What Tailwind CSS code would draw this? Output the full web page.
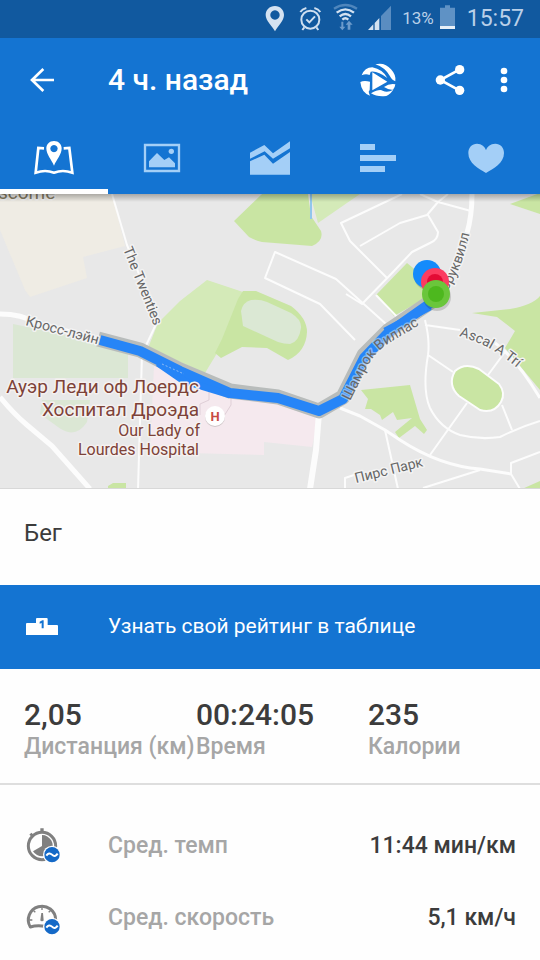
<!DOCTYPE html>
<html lang="ru">
<head>
<meta charset="utf-8">
<meta name="viewport" content="width=device-width, initial-scale=1">
<title>4 ч. назад</title>
<script src="https://cdn.jsdelivr.net/npm/@tailwindcss/browser@4"></script>
</head>
<body class="min-h-screen bg-[#fefefe] font-[Roboto,'Noto_Sans',sans-serif] text-[#3c3c3c]">

<div class="flex h-[38px] items-center justify-end gap-[6px] bg-[#11599f] pr-4 text-[#b9d0e9]">
  <svg class="h-[38px] w-7" viewBox="18 0 84 114" aria-label="Геолокация"><path fill="#d4e2f1" fill-rule="evenodd" d="M51 18C34 18 23 30 23 45C23 62 42 78 51 94C60 78 78 62 78 45C78 30 67 18 51 18ZM51 31A14 14 0 1 1 50.900 31Z"/></svg>
  <svg class="h-[38px] w-7" viewBox="120 0 84 114" fill="none" stroke="#cfdff0" stroke-width="6" aria-label="Будильник"><circle cx="157" cy="59" r="27"/><path d="M145 58L154 67L171 49M139 82L133 90M175 82L181 90M127 36Q133 27 145 24M169 24Q181 27 187 36"/></svg>
  <svg class="h-[38px] w-[27px]" viewBox="222 0 81 114" fill="none" stroke-width="7" aria-label="Wi-Fi"><path stroke="#4f86bd" d="M228 26Q262 4 297 26"/><g stroke="#d4e2f1"><path d="M236 38Q262 18 288 38M245 49Q262 35 279 49M253 59Q262 51 271 59"/></g><path fill="#6c9bcb" d="M250 65H256V80H262L253 91L244 80H250ZM269 89V74H263L273 62L284 74H277V89Z"/></svg>
  <svg class="h-[38px] w-[31px]" viewBox="321 0 93 114" aria-label="Сигнал сети"><path fill="#5a8dc1" d="M369 48L399 17V90H369Z"/><path fill="#d4e2f1" d="M330 90L346 73V90ZM350 69L364 54V90H350Z"/></svg>
  <span class="text-[17px]">13%</span>
  <svg class="h-[38px] w-[21px]" viewBox="543 0 63 114" aria-label="Батарея"><path fill="#5f92c5" d="M558 16H573V23H588V78H543V23H558Z"/><path fill="#e8f0f8" d="M543 78H588V87H543Z"/></svg>
  <time class="text-[23px] leading-[38px]">15:57</time>
</div>

<header class="bg-[#1474d2] text-white">
  <div class="flex h-21 items-center pr-[18px]">
    <button type="button" class="ml-6 grid size-9 place-items-center" aria-label="Назад">
      <svg class="size-9" viewBox="72 66 108 108" fill="none" stroke="currentColor" stroke-width="8"><path d="M130 87L96 120L130 153M95 120H162"/></svg>
    </button>
    <h1 class="ml-12 flex-1 text-[30px] leading-9 font-medium">4 ч. назад</h1>
    <button type="button" class="grid h-12 w-18 place-items-center" aria-label="Повтор тренировки">
      <svg class="h-9 w-10" viewBox="264 66 120 108" fill="currentColor"><path d="M275 106Q284 82 307 82Q338 88 352 114Q322 91 302 95L299 105Q287 100 275 106ZM316 73Q345 66 363 88Q379 105 376 124Q367 122 358 106Q344 82 316 73ZM307 97L352 125L307 151ZM271 126Q282 120 300 125L299 151Q293 154 300 167Q274 158 271 126ZM303 160Q328 146 338 152Q352 160 370 149Q357 168 341 169Q318 170 303 160ZM342 141Q357 130 376 133Q375 143 369 149Q358 151 342 141Z"/></svg>
    </button>
    <button type="button" class="grid h-12 w-18 place-items-center" aria-label="Поделиться">
      <svg class="h-9 w-9" viewBox="486 66 108 108" fill="currentColor"><path d="M568 89L511 120L568 151" fill="none" stroke="currentColor" stroke-width="8"/><circle cx="511" cy="120" r="14"/><circle cx="569" cy="89" r="14"/><circle cx="569" cy="151" r="14"/></svg>
    </button>
    <button type="button" class="grid h-12 w-9 place-items-center" aria-label="Ещё">
      <svg class="h-9 w-3" viewBox="684 66 36 108" fill="currentColor"><circle cx="702" cy="93" r="10"/><circle cx="702" cy="120" r="10"/><circle cx="702" cy="147" r="10"/></svg>
    </button>
  </div>
  <nav class="grid h-18 grid-cols-5 text-[#a4cff7]">
    <a href="#map" aria-label="Карта" class="flex items-center justify-center border-b-5 border-white pt-[5px] text-white">
      <svg class="h-9 w-11" viewBox="96 300 132 108"><path fill="none" stroke="currentColor" stroke-width="8" d="M132 325L115 324L107 398Q136 388 162 398Q188 388 217 398L208 324L191 325"/><path fill="currentColor" fill-rule="evenodd" d="M162 303C148 303 139 313 139 325C139 343 154 359 162 377C170 359 185 343 185 325C185 313 176 303 162 303ZM162 315A11 11 0 1 1 161.900 315Z"/></svg>
    </a>
    <a href="#photos" aria-label="Фото" class="flex items-center justify-center">
      <svg class="h-9 w-10" viewBox="426 300 120 108" fill="currentColor"><path fill="none" stroke="currentColor" stroke-width="7" d="M435 315H537V393H435Z"/><path d="M447 382V364L471 339L493 360L507 352L525 370V382Z"/><circle cx="514" cy="334" r="8"/></svg>
    </a>
    <a href="#charts" aria-label="Графики" class="flex items-center justify-center">
      <svg class="h-9 w-11" viewBox="-66 300 132 108" fill="currentColor"><path d="M-60 338L-17 315L9 340L60 304V325L9 356L-16 334L-60 356ZM-60 364L-17 344L9 371L60 336V404H-60Z"/></svg>
    </a>
    <a href="#splits" aria-label="Отрезки" class="flex items-center justify-center">
      <svg class="h-9 w-10" viewBox="264 300 120 108" fill="currentColor"><path d="M270 312H315V330H270ZM270 345H378V363H270ZM270 378H345V396H270Z"/></svg>
    </a>
    <a href="#heart" aria-label="Пульс" class="flex items-center justify-center">
      <svg class="h-9 w-10" viewBox="588 300 120 108" fill="currentColor"><path d="M648 399C626 386 595 370 595 339C595 322 606 311 621 311C635 311 645 320 648 331C651 320 661 311 676 311C691 311 702 322 702 339C702 370 670 386 648 399Z"/></svg>
    </a>
  </nav>
</header>

<main>
  <svg id="map" class="block h-auto w-full bg-[#e8e8e8]" viewBox="0 194 540 295" role="img" aria-label="Карта маршрута">
    <defs>
      <linearGradient id="shade" x1="0" y1="0" x2="0" y2="1"><stop offset="0" stop-color="#000" stop-opacity=".28"/><stop offset="1" stop-color="#000" stop-opacity="0"/></linearGradient>
      <path id="shamrock" d="M350 401L367 367Q375 353 386 345L426 321"/>
      <path id="brook" d="M447 292Q464 265 471 226"/>
      <path id="ascal" d="M459 336Q496 346 528 378"/>
    </defs>
    <path fill="#efece4" d="M0 194H112L125 246L83 257L87 278L30 297L25 290L0 230Z"/>
    <path fill="#dbe7d4" d="M13 324L128 348V378H13ZM42 400H90L87 422Q75 440 58 427L40 414Z"/>
    <path fill="#d4eab8" d="M207 280L243 292L222 345L205 373L148 348L158 323L180 301ZM310 194H360L318 223Z"/>
    <g fill="#c9e5a3">
      <path d="M262 194L234 221L249 237Q256 241 262 242L312 246Q324 241 321 231L311 216L308 194Z"/>
      <path d="M243 291H256L291 306Q307 318 307 332Q306 352 288 360L267 348L242 347L221 358L215 353L222 339L238 299Z"/>
      <path d="M407 263L440 290L394 316L376 295ZM510 204L540 193V214ZM472 313L510 309Q533 305 540 296V390L505 348L515 331L497 317ZM361 390L410 385L420 419L427 430L424 434L415 426L399 438L395 432L412 418L397 420L393 412L382 420L380 415L371 409L365 409L368 399ZM522 489L540 481V489ZM108 486L113 483H126V489H108Z"/>
    </g>
    <path fill="#dbe8d4" d="M241 311Q243 302 251 300Q260 299 267 302L291 313Q302 320 301 328Q299 342 290 344Q284 344 278 342L243 326Z"/>
    <path fill="#f5e9ee" d="M154 366L230 388L318 418L312 447L264 442V455L150 452Z"/>
    <path fill="none" stroke="#dfcfd7" d="M209 392V400L200 404V415M231 392V405L224 416"/>
    <path fill="none" stroke="#91c6ec" stroke-width="2" d="M311 194V219"/>
    <g fill="none" stroke="#fcfcfc" stroke-width="2" stroke-linejoin="round">
      <path d="M112 194L127 245L158 320L142 354L138 489"/>
      <path d="M355 340L320 304L265 278L275 252L336 279L386 324M402 194L360 214L341 223L350 241L387 278M448 194L438 202L427 215L400 223L360 246M438 202L471 211M420 194L438 202M428 215L438 232Q438 240 430 243L412 252L394 271L362 304L346 294M376 295L400 320M425 320Q430 340 428 355Q422 390 430 408Q440 428 460 435Q480 440 500 437Q520 427 540 421M425 325L460 330M428 355L453 372M488 375L505 352M502 405L512 430M467 403L430 455M385 430L398 489M480 470L423 488M540 452L511 463V474L520 489M345 489V478L360 473"/>
      <path stroke-width="3" d="M340 408L360 416L385 430L400 440Q440 466 480 469L511 474M495 343Q515 357 540 398"/>
      <path fill="#c9e5a3" d="M455 371Q465 362 479 369L499 384Q506 393 501 402Q494 414 480 410L459 396Q447 385 455 371Z"/>
      <g stroke-width="5"><path d="M0 314Q22 314 36 323L100 340M0 397Q13 413 27 425L52 446L90 489"/><path stroke-width="6" d="M319 413L316 450L310 489"/><path d="M472 194Q472 216 467 233Q458 270 436 293"/></g>
    </g>
    <g fill="none" stroke-linejoin="round">
      <path stroke="#b8bcbb" stroke-width="15" d="M98 339L140 350L180 370L230 391L278 397L319 411L343 397L364 355L388 331L432 301"/>
      <path stroke="#2685f7" stroke-width="10" d="M100 340L140 351L180 371L230 393L278 398L319 411L343 399L364 358L388 333L432 302"/>
      <path stroke="#2685f7" stroke-width="7" d="M158 363L184 381L230 395M385 331L430 307"/>
      <path stroke="#8dbcf5" stroke-width="1" stroke-dasharray="2 2" d="M162 364L184 374"/>
    </g>
    <g fill="#666" stroke="#f3f3f3" stroke-width="3" stroke-linejoin="round" class="text-[14px] [paint-order:stroke]">
      <text transform="translate(25 325) rotate(15)">Кросс-лэйн</text>
      <text transform="translate(123 249) rotate(68)">The Twenties</text>
      <text stroke-opacity=".45"><textPath href="#shamrock">Шамрок Виллас</textPath></text>
      <text><textPath href="#brook">Бруквилл</textPath></text>
      <text><textPath href="#ascal">Ascal A Trí</textPath></text>
      <text transform="translate(356 483) rotate(-14)">Пирс Парк</text>
      <text x="-2" y="199" fill="#857b62" class="text-[19px]">scome</text>
    </g>
    <circle cx="428" cy="276" r="14" fill="#000" opacity=".15"/>
    <circle cx="427" cy="274" r="14" fill="#148bfb"/>
    <circle cx="435" cy="282" r="14" fill="#fb3c61"/><circle cx="435" cy="282" r="8" fill="#e30b35"/>
    <circle cx="437" cy="297" r="14" fill="#000" opacity=".15"/>
    <circle cx="436" cy="294" r="14" fill="#6ac63b"/><circle cx="436" cy="294" r="8" fill="#4db81e"/>
    <g fill="#7d4238" stroke="#f5f1f0" stroke-width="3" stroke-linejoin="round" text-anchor="end" class="[paint-order:stroke]">
      <text x="199" y="393" class="text-[19px]">Ауэр Леди оф Лоердс</text>
      <text x="199" y="416" class="text-[19px]">Хоспитал Дроэда</text>
      <text x="200" y="436" class="text-[16px]">Our Lady of</text>
      <text x="199" y="455" class="text-[16px]">Lourdes Hospital</text>
    </g>
    <circle cx="215" cy="417" r="10" fill="#cfc6c8"/>
    <circle cx="215" cy="416" r="10" fill="#fff"/>
    <text x="215" y="421" text-anchor="middle" fill="#c84b43" class="text-[13px] font-bold">H</text>
    <rect x="0" y="194" width="540" height="8" fill="url(#shade)"/>
    <path stroke="#d8d8d8" stroke-width="2" d="M0 489H540"/>
  </svg>

  <h2 class="px-6 pt-7 pb-9 text-[24px] leading-8">Бег</h2>

  <a href="#leaderboard" class="flex h-21 items-center bg-[#1474d2] px-6 text-[21px] text-white">
    <svg class="h-10 w-9 shrink-0" viewBox="72 24 108 120" aria-hidden="true"><path fill="#fff" d="M78 75Q78 72 81 72H108V60Q108 57 111 57H140Q143 57 143 60V78H171Q174 78 174 81V108H78Z"/><path fill="#1474d2" d="M119 68L127 64H131V88H125V72L119 74Z"/></svg>
    <span class="ml-12">Узнать свой рейтинг в таблице</span>
  </a>

  <dl class="grid grid-cols-3 border-b-2 border-[#dedede] pt-7 pb-[22px] pl-6 font-medium whitespace-nowrap">
    <div class="flex flex-col-reverse"><dt class="text-[23px] leading-7 text-[#a6a6a6]">Дистанция (км)</dt><dd class="text-[30px] leading-9">2,05</dd></div>
    <div class="flex flex-col-reverse"><dt class="text-[23px] leading-7 text-[#a6a6a6]">Время</dt><dd class="text-[30px] leading-9">00:24:05</dd></div>
    <div class="flex flex-col-reverse"><dt class="text-[23px] leading-7 text-[#a6a6a6]">Калории</dt><dd class="text-[30px] leading-9">235</dd></div>
  </dl>

  <dl class="px-6 pt-[25px] text-[23px] font-medium">
    <div class="flex h-18 items-center">
      <dt class="flex flex-1 items-center text-[#a6a6a6]">
        <svg class="size-10 shrink-0" viewBox="72 48 120 120" aria-hidden="true"><circle cx="126" cy="108" r="41" fill="none" stroke="#808080" stroke-width="9"/><path fill="#808080" d="M121 55H131V67H121ZM88 74L94 68L103 76L97 82ZM126 75A32 32 0 1 1 99 124L126 108Z"/><circle cx="156" cy="134" r="27" fill="#fefefe"/><circle cx="156" cy="134" r="23" fill="#1469c7"/><path fill="none" stroke="#fff" stroke-width="6" d="M139 137Q147 125 156 134T173 131"/></svg>
        <span class="ml-11">Сред. темп</span>
      </dt>
      <dd>11:44 мин/км</dd>
    </div>
    <div class="flex h-18 items-center">
      <dt class="flex flex-1 items-center text-[#a6a6a6]">
        <svg class="size-10 shrink-0" viewBox="72 264 120 120" aria-hidden="true"><path fill="none" stroke="#808080" stroke-width="9" stroke-linejoin="round" d="M167 330A41 41 0 1 0 91 351Q110 345 136 349"/><path fill="none" stroke="#808080" stroke-width="4" d="M126 292V300M101 302L106 307M151 302L146 307M88 330H97M154 330H164"/><path fill="#808080" d="M124 309H129L131 330Q131 334 126 334Q121 334 121 330Z"/><circle cx="156" cy="350" r="27" fill="#fefefe"/><circle cx="156" cy="350" r="23" fill="#1469c7"/><path fill="none" stroke="#fff" stroke-width="6" d="M139 353Q147 341 156 350T173 347"/></svg>
        <span class="ml-11">Сред. скорость</span>
      </dt>
      <dd>5,1 км/ч</dd>
    </div>
  </dl>
</main>
</body>
</html>
